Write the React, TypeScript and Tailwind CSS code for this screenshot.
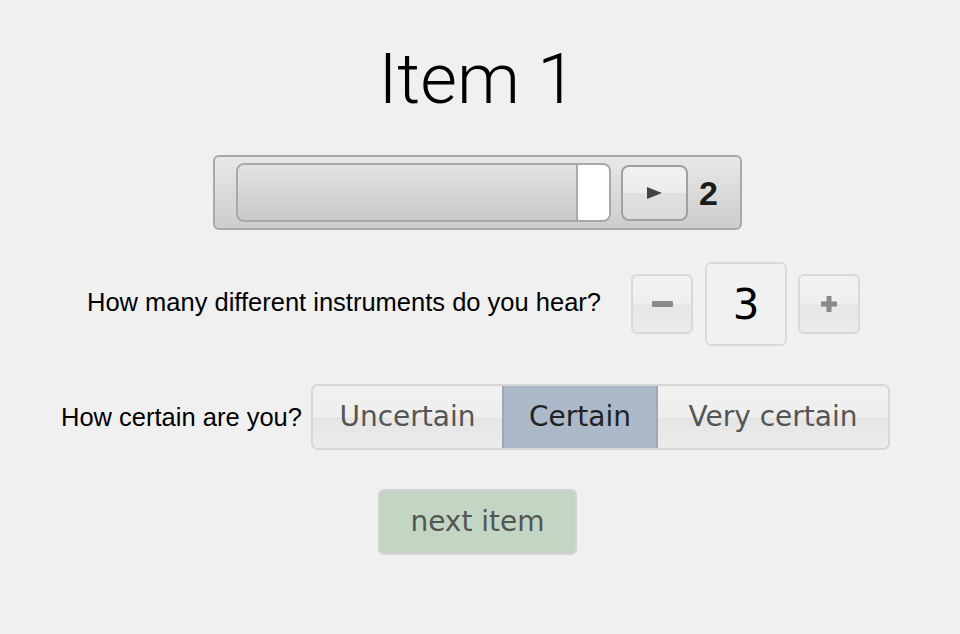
export default function App() {
  const options = [
    { label: 'Uncertain', w: 'w-[189px]' },
    { label: 'Certain', w: 'w-[156px]' },
    { label: 'Very certain', w: 'w-[230px]' },
  ]
  const selected = 'Certain'

  return (
    <div className="min-h-[634px] w-full bg-[#f0f0f0] flex flex-col items-center pr-[5px] font-['Liberation_Sans',Arial,sans-serif]">
      <h1 className="mt-[37px] h-[84px] leading-[84px] text-[71px] font-light text-black font-['Roboto',sans-serif]">Item 1</h1>

      {/* audio player */}
      <div className="mt-[34px] w-[529px] h-[75px] rounded-[6px] border-2 border-[#a9a9a9] bg-gradient-to-b from-[#e8e8e8] to-[#cdcdcd] flex items-center pl-[21px]">
        <div className="w-[375px] h-[59px] rounded-[8px] border-2 border-[#a8a8a8] bg-gradient-to-b from-[#e3e3e3] to-[#c9c9c9] flex justify-end overflow-hidden">
          <div className="w-[33px] h-full bg-white border-l-2 border-[#a8a8a8]" />
        </div>
        <button className="ml-[10px] w-[67px] h-[56px] rounded-[8px] border-2 border-[#a0a0a0] bg-[linear-gradient(#f1f1f1_0%,#ececec_50%,#e0e0e0_51%,#dcdcdc_100%)] flex items-center justify-center">
          <svg width="17" height="14" viewBox="0 0 17 14">
            <path d="M1 1 L16 7 L1 13 Z" fill="#444" />
          </svg>
        </button>
        <span className="ml-[11px] text-[34px] font-bold text-[#1a1a1a] leading-none">2</span>
      </div>

      {/* instruments count */}
      <div className="mt-[32px] mr-[8px] flex items-center">
        <span className="text-[25.5px] text-black mr-[30px] -mt-[3px]">How many different instruments do you hear?</span>
        <button className="w-[62px] h-[60px] rounded-[6px] border-2 border-[#d9d9d9] bg-[linear-gradient(#f2f2f2_0%,#efefef_50%,#e6e6e6_51%,#ececec_100%)] flex items-center justify-center">
          <div className="w-[21px] h-[6px] bg-[#8a8a8a] rounded-[1px]" />
        </button>
        <div className="ml-[12px] w-[82px] h-[84px] rounded-[6px] border-2 border-[#d9d9d9] bg-[#f1f1f1] flex items-center justify-center text-[42px] text-black font-['DejaVu_Sans',Verdana,sans-serif]">3</div>
        <button className="ml-[11px] w-[62px] h-[60px] rounded-[6px] border-2 border-[#d9d9d9] bg-[linear-gradient(#f2f2f2_0%,#efefef_50%,#e6e6e6_51%,#ececec_100%)] flex items-center justify-center">
          <svg width="16" height="16" viewBox="0 0 16 16">
            <path d="M5.5 0h5v5.5H16v5h-5.5V16h-5v-5.5H0v-5h5.5z" fill="#8a8a8a" />
          </svg>
        </button>
      </div>

      {/* certainty */}
      <div className="mt-[38px] mr-[4px] flex items-center">
        <span className="text-[25.5px] text-black mr-[9px]">How certain are you?</span>
        <div className="flex h-[66px] rounded-[7px] border-2 border-[#d6d6d6] overflow-hidden font-['DejaVu_Sans',Verdana,sans-serif] text-[28px]">
          {options.map((o) => (
            <div
              key={o.label}
              className={
                o.label === selected
                  ? `${o.w} flex items-center justify-center bg-[#abb9c9] text-[#222] border-x-2 border-[#9ea8b4]`
                  : `${o.w} flex items-center justify-center bg-[linear-gradient(#f1f1f1_0%,#eeeeee_50%,#e5e5e5_51%,#ebebeb_100%)] text-[#555]`
              }
            >
              {o.label}
            </div>
          ))}
        </div>
      </div>

      <button className="mt-[39px] w-[199px] h-[66px] rounded-[6px] border-2 border-[#d3d3d3] bg-[#c3d6c3] text-[#555] text-[28px] font-['DejaVu_Sans',Verdana,sans-serif]">next item</button>
    </div>
  )
}
